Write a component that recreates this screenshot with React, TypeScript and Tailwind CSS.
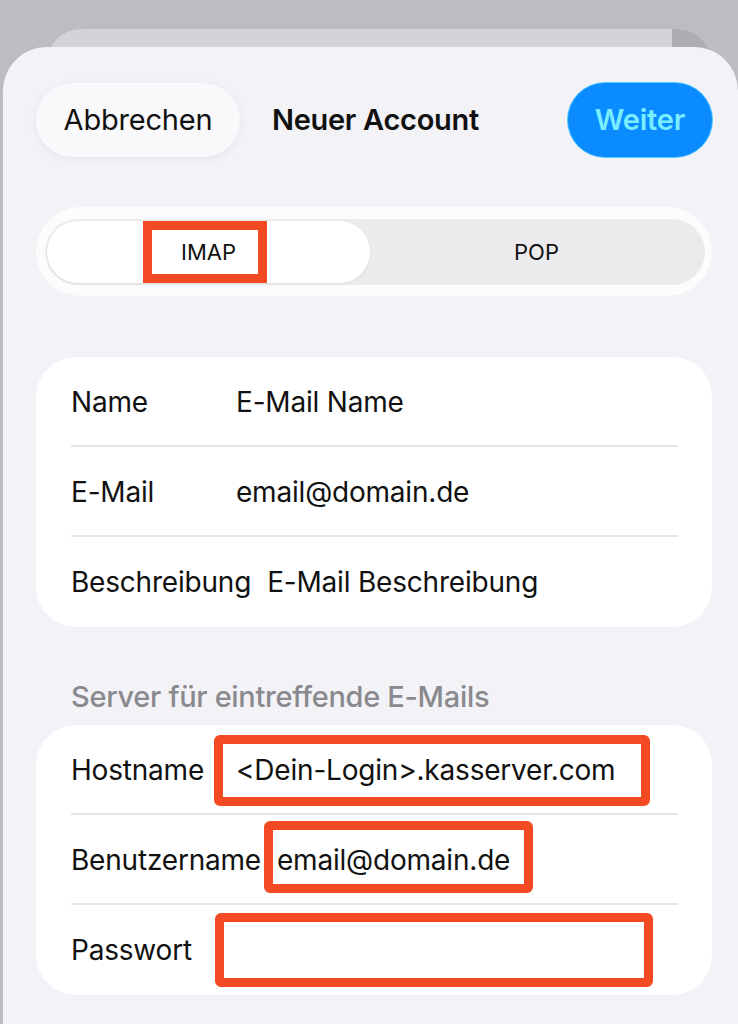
import React from "react";

const font = { fontFamily: "Inter, 'Noto Sans', sans-serif" };

function Row({
  label,
  value,
  divider,
  children,
}: {
  label: string;
  value?: string;
  divider?: boolean;
  children?: React.ReactNode;
}) {
  return (
    <div className="relative h-[90px] px-[35px]">
      <div className="flex h-full items-center gap-[16px]">
        <span className="min-w-[149px] text-[28px] text-[#111] tracking-[-0.2px]">{label}</span>
        {value && <span className="text-[28px] text-[#111] tracking-[-0.2px]">{value}</span>}
      </div>
      {divider && <div className="absolute bottom-0 left-[35px] right-[34px] h-[2px] bg-[#e6e6ea]" />}
      {children}
    </div>
  );
}

function RedBox({ className }: { className: string }) {
  return <div className={"pointer-events-none absolute border-[9px] border-[#f34a24] " + className} />;
}

export default function App() {
  return (
    <div className="relative h-[1024px] w-[738px] overflow-hidden bg-[#bdbcc1]" style={font}>
      <div className="absolute left-[47px] top-[29px] h-[120px] w-[665px] overflow-hidden rounded-t-[34px] bg-[#d3d3d8]">
        <div className="absolute right-0 top-0 h-[60px] w-[40px] rounded-tr-[34px] bg-[#aeadb2]" />
      </div>
      <div className="relative ml-[3px] mt-[47px] h-[977px] rounded-t-[44px] bg-[#f2f2f7] pl-[33px] pr-[26px] pt-[36px]">
        <div className="flex h-[74px] items-center">
          <div className="flex h-[74px] w-[204px] items-center justify-center rounded-full bg-[#f9f9fc] shadow-[0_2px_10px_rgba(0,0,0,0.06)]">
            <span className="text-[29px] text-[#111] tracking-[-0.2px]">Abbrechen</span>
          </div>
          <span className="ml-[32px] text-[29px] font-semibold text-[#111] tracking-[-0.3px]">Neuer Account</span>
          <div className="ml-auto flex h-[74px] w-[144px] items-center justify-center rounded-full bg-[#0a8bff] shadow-[0_0_0_1px_#55c8ff]">
            <span className="text-[29px] font-semibold text-[#7aeeff] tracking-[-0.2px]">Weiter</span>
          </div>
        </div>

        <div className="mt-[50px] h-[89px] rounded-full bg-[#fcfcfd] pb-[11px] pl-[9px] pr-[7px] pt-[12px]">
          <div className="relative flex h-full rounded-full bg-[#ebebed] p-[2px]">
            <div className="flex h-full w-[323px] items-center justify-center rounded-full bg-white shadow-[0_1px_3px_rgba(0,0,0,0.06)]">
              <span className="text-[22px] text-[#111]">IMAP</span>
            </div>
            <div className="flex flex-1 items-center justify-center">
              <span className="text-[22px] text-[#111]">POP</span>
            </div>
            <RedBox className="left-[98px] top-[2px] h-[62px] w-[124px]" />
          </div>
        </div>

        <div className="mt-[61px] rounded-[40px] bg-white">
          <Row label="Name" value="E-Mail Name" divider />
          <Row label="E-Mail" value="email@domain.de" divider />
          <Row label="Beschreibung" value="E-Mail Beschreibung" />
        </div>

        <div className="mt-[52px] px-[35px] text-[29px] font-medium leading-[36px] text-[#8a8a8e] tracking-[-0.3px]">
          Server für eintreffende E-Mails
        </div>

        <div className="mt-[10px] rounded-[40px] bg-white">
          <Row label="Hostname" value="<Dein-Login>.kasserver.com" divider>
            <RedBox className="left-[178px] top-[10px] h-[71px] w-[436px] rounded-[6px]" />
          </Row>
          <Row label="Benutzername" value="email@domain.de" divider>
            <RedBox className="left-[228px] top-[6px] h-[72px] w-[269px] rounded-[6px]" />
          </Row>
          <Row label="Passwort">
            <RedBox className="left-[179px] top-[8px] h-[74px] w-[438px] rounded-[6px]" />
          </Row>
        </div>
      </div>
    </div>
  );
}
